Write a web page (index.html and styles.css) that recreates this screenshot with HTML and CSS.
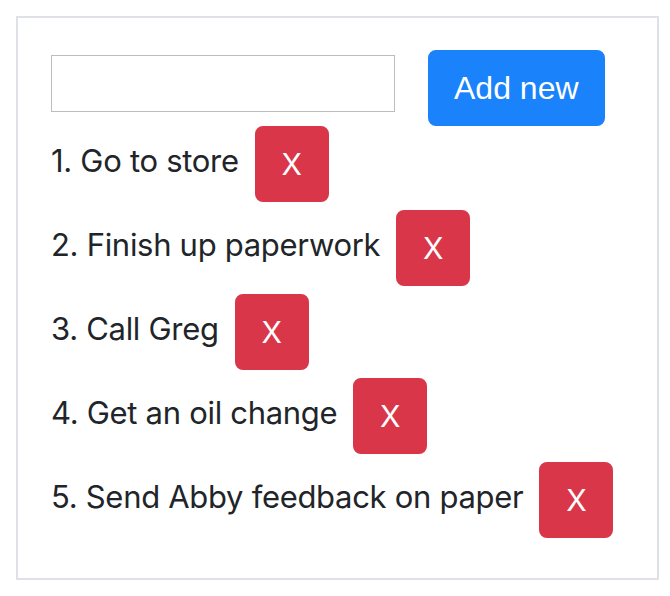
FILE: index.html
```html
<!DOCTYPE html>
<html>
<head>
<meta charset="utf-8">
<link rel="stylesheet" href="styles.css">
</head>
<body>
<div class="card">
  <div class="add-row">
    <input class="new-input" type="text">
    <button class="btn btn-primary">Add new</button>
  </div>
  <ol class="todo-list">
    <li class="todo"><span class="todo-text">1. Go to store</span><button class="btn btn-danger">X</button></li>
    <li class="todo"><span class="todo-text">2. Finish up paperwork</span><button class="btn btn-danger">X</button></li>
    <li class="todo"><span class="todo-text">3. Call Greg</span><button class="btn btn-danger">X</button></li>
    <li class="todo"><span class="todo-text">4. Get an oil change</span><button class="btn btn-danger">X</button></li>
    <li class="todo"><span class="todo-text">5. Send Abby feedback on paper</span><button class="btn btn-danger">X</button></li>
  </ol>
</div>
</body>
</html>
```
FILE: styles.css
```css
html, body {
  margin: 0;
  padding: 0;
  background: #fff;
}
body {
  font-family: Inter, "Liberation Sans", sans-serif;
  color: #212529;
  font-size: 32px;
  line-height: 48px;
}
.card {
  margin: 16px;
  width: 643px;
  box-sizing: border-box;
  border: 2px solid #dee2e6;
  padding: 32px 32px 32px 33px;
}
.add-row {
  display: flex;
  align-items: flex-start;
  gap: 33px;
}
.new-input {
  margin: 5px 0 0 0;
  width: 344px;
  height: 57px;
  box-sizing: border-box;
  border: 1px solid #bdbdbd;
  padding: 0 8px;
  font-size: 28px;
  font-family: inherit;
  outline: none;
}
.btn {
  box-sizing: border-box;
  height: 76px;
  padding: 12px 24px;
  border: 2px solid transparent;
  border-radius: 8px;
  font-size: 32px;
  line-height: 48px;
  color: #fff;
  cursor: pointer;
  flex-shrink: 0;
}
.btn-primary {
  background: #1a82fb;
  border-color: #1a82fb;
  font-family: "Liberation Sans", Arial, sans-serif;
}
.btn-danger {
  background: #da364a;
  border-color: #da364a;
  font-family: Inter, "Liberation Sans", sans-serif;
  font-size: 30px;
  width: 74px;
  padding: 12px 0;
  margin-left: 16px;
}
.todo-list {
  list-style: none;
  margin: 0;
  padding: 0;
}
.todo {
  display: flex;
  align-items: center;
  margin-bottom: 8px;
}
.todo-text {
  font-size: 31px;
  letter-spacing: -0.3px;
  white-space: nowrap;
  margin-top: -6px;
}
```
